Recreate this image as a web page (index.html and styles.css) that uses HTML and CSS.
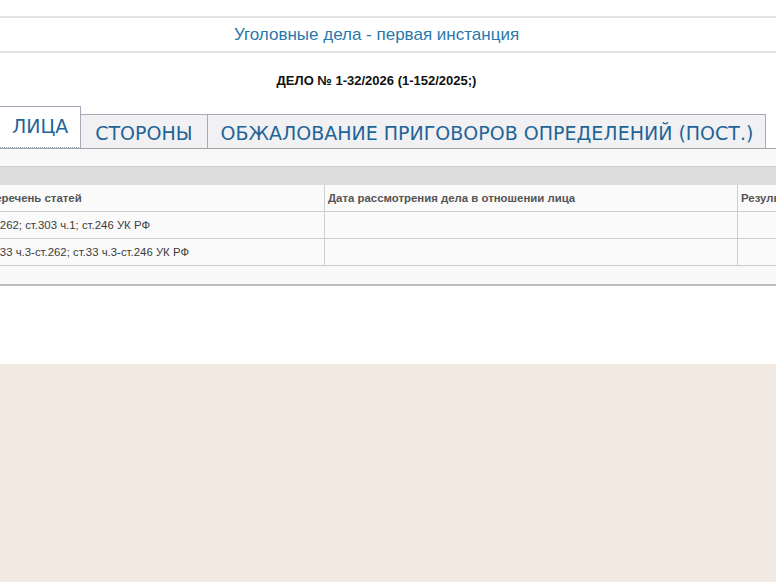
FILE: index.html
```html
<!DOCTYPE html>
<html lang="ru">
<head>
    <meta charset="UTF-8">
    <title>Уголовные дела - первая инстанция</title>
    <link rel="stylesheet" href="styles.css">
</head>
<body>
    <div class="page">
        <div class="top-gap"></div>
        <div class="title">Уголовные дела - первая инстанция</div>
        <div class="case-no">ДЕЛО № 1-32/2026 (1-152/2025;)</div>

        <div class="tabs">
            <div class="tab active">ЛИЦА</div>
            <div class="tab">СТОРОНЫ</div>
            <div class="tab">ОБЖАЛОВАНИЕ ПРИГОВОРОВ ОПРЕДЕЛЕНИЙ (ПОСТ.)</div>
        </div>

        <div class="panel">
            <div class="panel-bar"></div>
            <table class="persons">
                <tr>
                    <th class="c1">Перечень статей</th>
                    <th class="c2">Дата рассмотрения дела в отношении лица</th>
                    <th class="c3">Результат рассмотрения</th>
                </tr>
                <tr>
                    <td>ст.262; ст.303 ч.1; ст.246 УК РФ</td>
                    <td></td>
                    <td></td>
                </tr>
                <tr>
                    <td>ст.33 ч.3-ст.262; ст.33 ч.3-ст.246 УК РФ</td>
                    <td></td>
                    <td></td>
                </tr>
            </table>
        </div>
    </div>
</body>
</html>
```

FILE: styles.css
```css
body {
    margin: 0;
    font-family: "Liberation Sans", Arial, sans-serif;
    background-color: #f3ebe3;
    overflow: hidden;
}

.page {
    background-color: #fff;
    height: 365px;
    border-bottom: 1px solid #efe6dc;
    box-sizing: border-box;
}

.top-gap {
    height: 16px;
    border-bottom: 2px solid #e4e4e4;
}

.title {
    height: 33px;
    line-height: 34px;
    text-align: center;
    font-size: 17px;
    color: #2a78ab;
    border-bottom: 2px solid #e4e4e4;
    padding-right: 23px;
}

.case-no {
    text-align: center;
    font-size: 13px;
    font-weight: bold;
    color: #111;
    padding-top: 20px;
    padding-right: 23px;
    height: 33px;
}

.tabs {
    display: flex;
    align-items: flex-end;
    margin-left: -2px;
    height: 42px;
}

.tab {
    font-family: "DejaVu Sans", Verdana, sans-serif;
    font-size: 19px;
    color: #1f6497;
    background-color: #f1f1f3;
    border: 1px solid #a9a9b0;
    border-bottom: none;
    border-left: none;
    padding: 0 14px;
    height: 33px;
    line-height: 37px;
}

.tab:last-child {
    padding: 0 12px 0 13px;
}

.tab.active {
    background-color: #fff;
    border: 1px solid #a3acb8;
    border-bottom: 1px dotted #8aa0b8;
    height: 40px;
    line-height: 39px;
    padding: 0 12px 0 13px;
}

.panel {
    border-top: 1px solid #a4a4a4;
    background-color: #f8f8f8;
    padding-top: 17px;
    border-bottom: 2px solid #bcbcbc;
    padding-bottom: 18px;
}

.panel-bar {
    height: 18px;
    background-color: #dcdcdc;
    border-top: 1px solid #cfcfcf;
}

.persons {
    border-collapse: collapse;
    margin-left: -17px;
    width: 960px;
    table-layout: fixed;
    background-color: #fafafa;
}

.persons th,
.persons td {
    font-size: 11.4px;
    text-align: left;
    padding: 0 3px;
    height: 26px;
    border: 1px solid #cdcdcd;
    color: #3c3c3c;
    white-space: nowrap;
    overflow: hidden;
}

.persons th {
    font-weight: bold;
    color: #555;
    border-top: none;
}

.persons .c1 {
    width: 334px;
}

.persons .c2 {
    width: 406px;
}
```
